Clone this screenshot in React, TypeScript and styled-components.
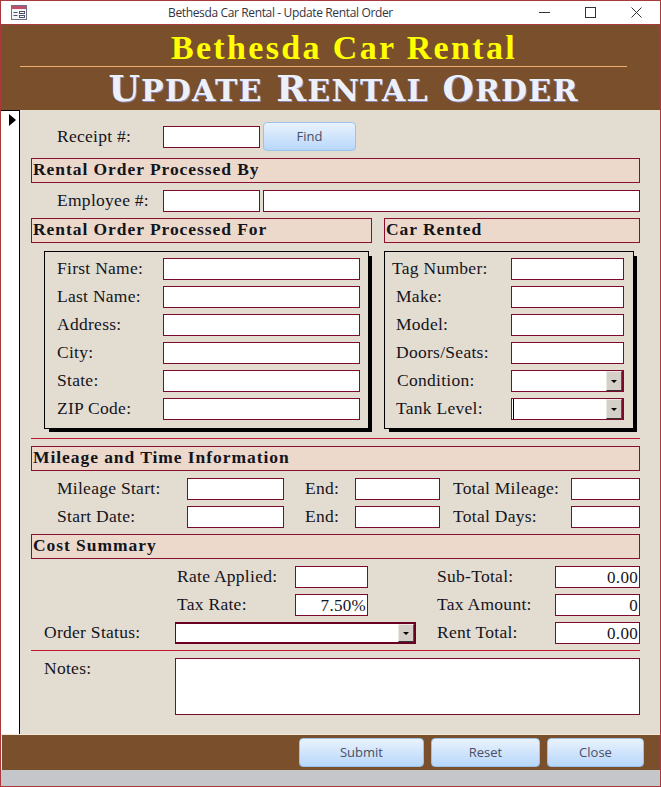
import styled, { createGlobalStyle } from 'styled-components'

const Global = createGlobalStyle`
  html, body { margin: 0; padding: 0; background: #fff; }
  * { box-sizing: border-box; }
`

const Window = styled.div`
  width: 661px;
  height: 787px;
  display: flex;
  flex-direction: column;
  border: 1px solid #a83a3e;
  background: #fff;
  overflow: hidden;
`

const TitleBar = styled.div`
  height: 24px;
  flex: none;
  display: grid;
  grid-template-columns: 167px 1fr auto;
  align-items: center;
  background: #fff;
  border-bottom: 1px solid #a83a3e;
`

const AppIcon = styled.svg`
  margin-left: 10px;
  display: block;
`

const WindowTitle = styled.div`
  font: 12px 'Open Sans', sans-serif;
  letter-spacing: -0.36px;
  color: #34343e;
  white-space: nowrap;
`

const WindowControls = styled.div`
  display: flex;
  justify-content: flex-end;
  align-items: center;
  padding-right: 18px;
  gap: 35px;
`

const Header = styled.div`
  height: 85px;
  flex: none;
  background: #7a4f2b;
  display: flex;
  flex-direction: column;
  align-items: center;
`

const CompanyName = styled.div`
  width: 607px;
  margin-left: -14px;
  height: 44px;
  padding: 5px 0 0 41px;
  border-bottom: 1px solid #f0ae6e;
  text-align: center;
  font: bold 34px/36px 'Liberation Serif', serif;
  letter-spacing: 2.35px;
  color: #ffff00;
  white-space: nowrap;
`

const FormTitle = styled.div`
  margin-left: 26px;
  font: bold 36px/43px 'DejaVu Serif', serif;
  letter-spacing: 1.2px;
  text-transform: uppercase;
  color: #ecf1f9;
  text-shadow: 1px 1px 0 #8d86b8;
  white-space: nowrap;
`

const SmallCaps = styled.span`
  font-size: 30px;
`

const Middle = styled.div`
  flex: 1;
  min-height: 0;
  display: flex;
`

const RecordSelector = styled.div`
  width: 19px;
  flex: none;
  background: #fff;
  border-top: 1px solid #000;
  border-right: 1px solid #000;
  padding: 1px 0 0 8px;
`

const Form = styled.div`
  flex: 1;
  min-width: 0;
  background: #e3dcd1;
  padding: 0 0 0 11px;
  display: flex;
  flex-direction: column;
`

const Row = styled.div<{ $columns: string; $top: number }>`
  display: grid;
  grid-template-columns: ${(p) => p.$columns};
  align-items: start;
  margin-top: ${(p) => p.$top}px;
`

const FieldGrid = styled.div<{ $columns: string; $top: number }>`
  display: grid;
  grid-template-columns: ${(p) => p.$columns};
  grid-auto-rows: 22px;
  row-gap: 6px;
  align-items: center;
  margin-top: ${(p) => p.$top}px;
`

const Label = styled.div<{ $indent?: number; $start?: number }>`
  padding: 0 0 2px ${(p) => p.$indent ?? 0}px;
  grid-column-start: ${(p) => p.$start ?? 'auto'};
  font: 17.5px/20px 'Liberation Serif', serif;
  letter-spacing: 0.28px;
  color: #14141c;
  white-space: nowrap;
`

const Input = styled.div<{ $start?: number; $span?: number }>`
  height: 22px;
  background: #fff;
  border: 1px solid #7c0a2a;
  grid-column: ${(p) => (p.$start ? `${p.$start} / span ${p.$span ?? 1}` : 'auto')};
  padding-right: 1px;
  text-align: right;
  font: 17px/21px 'Liberation Serif', serif;
  letter-spacing: 0.3px;
  color: #14141c;
  overflow: hidden;
`

const Combo = styled(Input)<{ $heavy?: boolean }>`
  position: relative;
  border-right-width: 2px;
  border-top-width: ${(p) => (p.$heavy ? 2 : 1)}px;
  border-bottom-width: ${(p) => (p.$heavy ? 2 : 1)}px;
  border-color: ${(p) => (p.$heavy ? '#6a0022' : '#7c0a2a')};
`

const ComboButton = styled.div`
  position: absolute;
  top: 0;
  right: 0;
  bottom: 0;
  width: 16px;
  background: #d4d0c8;
  border-right: 1px solid #555;
  border-bottom: 1px solid #333;
  border-top: 1px solid #ebe8e2;
  border-left: 1px solid #ebe8e2;
  display: flex;
  align-items: center;
  justify-content: center;
  &::after {
    content: '';
    width: 0;
    height: 0;
    border-left: 3px solid transparent;
    border-right: 3px solid transparent;
    border-top: 3px solid #000;
  }
`

const Caret = styled.div`
  position: absolute;
  left: 1px;
  top: 0;
  bottom: 0;
  width: 1px;
  background: #000;
`

const NotesInput = styled(Input)`
  height: 57px;
`

const SectionTitle = styled.div<{ $top?: number }>`
  height: 25px;
  margin-top: ${(p) => p.$top ?? 0}px;
  background: #ecd9cb;
  border: 1px solid #8d0f30;
  padding-left: 1px;
  font: bold 17.5px/20px 'Liberation Serif', serif;
  letter-spacing: 0.94px;
  color: #14141c;
  white-space: nowrap;
  overflow: hidden;
`

const FullTitle = styled(SectionTitle)`
  width: 609px;
`

const Columns = styled.div`
  display: grid;
  grid-template-columns: 341px 256px;
  column-gap: 12px;
  margin-top: 6px;
`

const Box = styled.div<{ $width: number; $left: number; $columns: string }>`
  width: ${(p) => p.$width}px;
  height: 178px;
  margin: 8px 0 0 ${(p) => p.$left}px;
  padding-top: 6px;
  border: 1px solid #000;
  box-shadow: 4px 4px 0 -1px #000;
  display: grid;
  grid-template-columns: ${(p) => p.$columns};
  grid-auto-rows: 22px;
  row-gap: 6px;
  align-items: center;
`

const Divider = styled.div<{ $top: number }>`
  width: 609px;
  height: 1px;
  flex: none;
  margin-top: ${(p) => p.$top}px;
  background: #c0142c;
`

const Footer = styled.div`
  height: 36px;
  flex: none;
  background: #7a4f2b;
  border-top: 1px solid #f2ebdc;
  border-left: 1px solid #f2ebdc;
  display: flex;
  justify-content: flex-end;
  padding: 3px 16px 0 0;
  gap: 7px;
`

const ActionButton = styled.div<{ $width: number }>`
  width: ${(p) => p.$width}px;
  height: 29px;
  border: 1px solid #9dc2e8;
  border-radius: 4px;
  background: linear-gradient(#e9f2fd, #b8d7fb);
  font: 13px/27px 'Open Sans', sans-serif;
  color: #4c4e62;
  text-align: center;
`

const FindButton = styled(ActionButton)`
  margin: -4px 0 0 3px;
  grid-column: 3 / span 2;
`

const StatusBar = styled.div`
  height: 16px;
  flex: none;
  background: #c5c6ca;
`

const selectorColumns = '132px 97px 3px 377px'
const mileageColumns = '156px 97px 71px 85px 131px 69px'
const costColumns = '144px 120px 73px 48px 139px 85px'
const customerFields = ['First Name:', 'Last Name:', 'Address:', 'City:', 'State:', 'ZIP Code:']
const carFields: [string, number][] = [
  ['Tag Number:', 7],
  ['Make:', 11],
  ['Model:', 11],
  ['Doors/Seats:', 11],
]

export default function App() {
  return (
    <Window>
      <Global />
      <TitleBar>
        <AppIcon width="17" height="16" viewBox="0 0 17 16">
          <rect x="0.5" y="0.5" width="15" height="14" fill="#f4f5f8" stroke="#6d7088" />
          <rect x="1" y="1" width="14" height="3" fill="#c0506a" />
          <path d="M2.5 7.5h4M2.5 10.5h4" stroke="#50556e" fill="none" />
          <rect x="8.5" y="6.5" width="5" height="2" fill="#fff" stroke="#50556e" />
          <rect x="8.5" y="10.5" width="5" height="2" fill="#fff" stroke="#50556e" />
        </AppIcon>
        <WindowTitle>Bethesda Car Rental - Update Rental Order</WindowTitle>
        <WindowControls>
          <svg width="11" height="11" viewBox="0 0 11 11">
            <path d="M0 5.5h11" stroke="#333" fill="none" />
          </svg>
          <svg width="11" height="11" viewBox="0 0 11 11">
            <rect x="0.5" y="0.5" width="10" height="10" stroke="#333" fill="none" />
          </svg>
          <svg width="11" height="11" viewBox="0 0 11 11">
            <path d="M0.5 0.5l10 10M10.5 0.5l-10 10" stroke="#333" fill="none" />
          </svg>
        </WindowControls>
      </TitleBar>
      <Header>
        <CompanyName>Bethesda Car Rental</CompanyName>
        <FormTitle>
          U<SmallCaps>pdate</SmallCaps> R<SmallCaps>ental</SmallCaps> O<SmallCaps>rder</SmallCaps>
        </FormTitle>
      </Header>
      <Middle>
        <RecordSelector>
          <svg width="7" height="12" viewBox="0 0 7 12">
            <path d="M0 0l7 6-7 6z" fill="#000" />
          </svg>
        </RecordSelector>
        <Form>
          <Row $columns={selectorColumns} $top={16}>
            <Label $indent={26}>Receipt #:</Label>
            <Input />
            <FindButton $width={93}>Find</FindButton>
          </Row>
          <FullTitle $top={7}>Rental Order Processed By</FullTitle>
          <Row $columns={selectorColumns} $top={7}>
            <Label $indent={26}>Employee #:</Label>
            <Input />
            <span />
            <Input />
          </Row>
          <Columns>
            <div>
              <SectionTitle>Rental Order Processed For</SectionTitle>
              <Box $width={325} $left={13} $columns="118px 197px">
                {customerFields.map((name) => [
                  <Label key={name} $indent={12}>
                    {name}
                  </Label>,
                  <Input key={name + 'input'} />,
                ])}
              </Box>
            </div>
            <div>
              <SectionTitle>Car Rented</SectionTitle>
              <Box $width={250} $left={0} $columns="126px 113px">
                {carFields.map(([name, indent]) => [
                  <Label key={name} $indent={indent}>
                    {name}
                  </Label>,
                  <Input key={name + 'input'} />,
                ])}
                <Label $indent={12}>Condition:</Label>
                <Combo>
                  <ComboButton />
                </Combo>
                <Label $indent={11}>Tank Level:</Label>
                <Combo>
                  <Caret />
                  <ComboButton />
                </Combo>
              </Box>
            </div>
          </Columns>
          <Divider $top={9} />
          <FullTitle $top={7}>Mileage and Time Information</FullTitle>
          <FieldGrid $columns={mileageColumns} $top={7}>
            <Label $indent={26}>Mileage Start:</Label>
            <Input />
            <Label $indent={21}>End:</Label>
            <Input />
            <Label $indent={13}>Total Mileage:</Label>
            <Input />
            <Label $indent={26}>Start Date:</Label>
            <Input />
            <Label $indent={21}>End:</Label>
            <Input />
            <Label $indent={13}>Total Days:</Label>
            <Input />
          </FieldGrid>
          <FullTitle $top={6}>Cost Summary</FullTitle>
          <FieldGrid $columns={costColumns} $top={7}>
            <Label $start={2} $indent={2}>
              Rate Applied:
            </Label>
            <Input />
            <Label $start={5} $indent={21}>
              Sub-Total:
            </Label>
            <Input>0.00</Input>
            <Label $start={2} $indent={2}>
              Tax Rate:
            </Label>
            <Input>7.50%</Input>
            <Label $start={5} $indent={21}>
              Tax Amount:
            </Label>
            <Input>0</Input>
            <Label $indent={13}>Order Status:</Label>
            <Combo $start={2} $span={3} $heavy>
              <ComboButton />
            </Combo>
            <Label $indent={21}>Rent Total:</Label>
            <Input>0.00</Input>
          </FieldGrid>
          <Divider $top={6} />
          <Row $columns="144px 465px" $top={7}>
            <Label $indent={13}>Notes:</Label>
            <NotesInput />
          </Row>
        </Form>
      </Middle>
      <Footer>
        <ActionButton $width={125}>Submit</ActionButton>
        <ActionButton $width={109}>Reset</ActionButton>
        <ActionButton $width={97}>Close</ActionButton>
      </Footer>
      <StatusBar />
    </Window>
  )
}
